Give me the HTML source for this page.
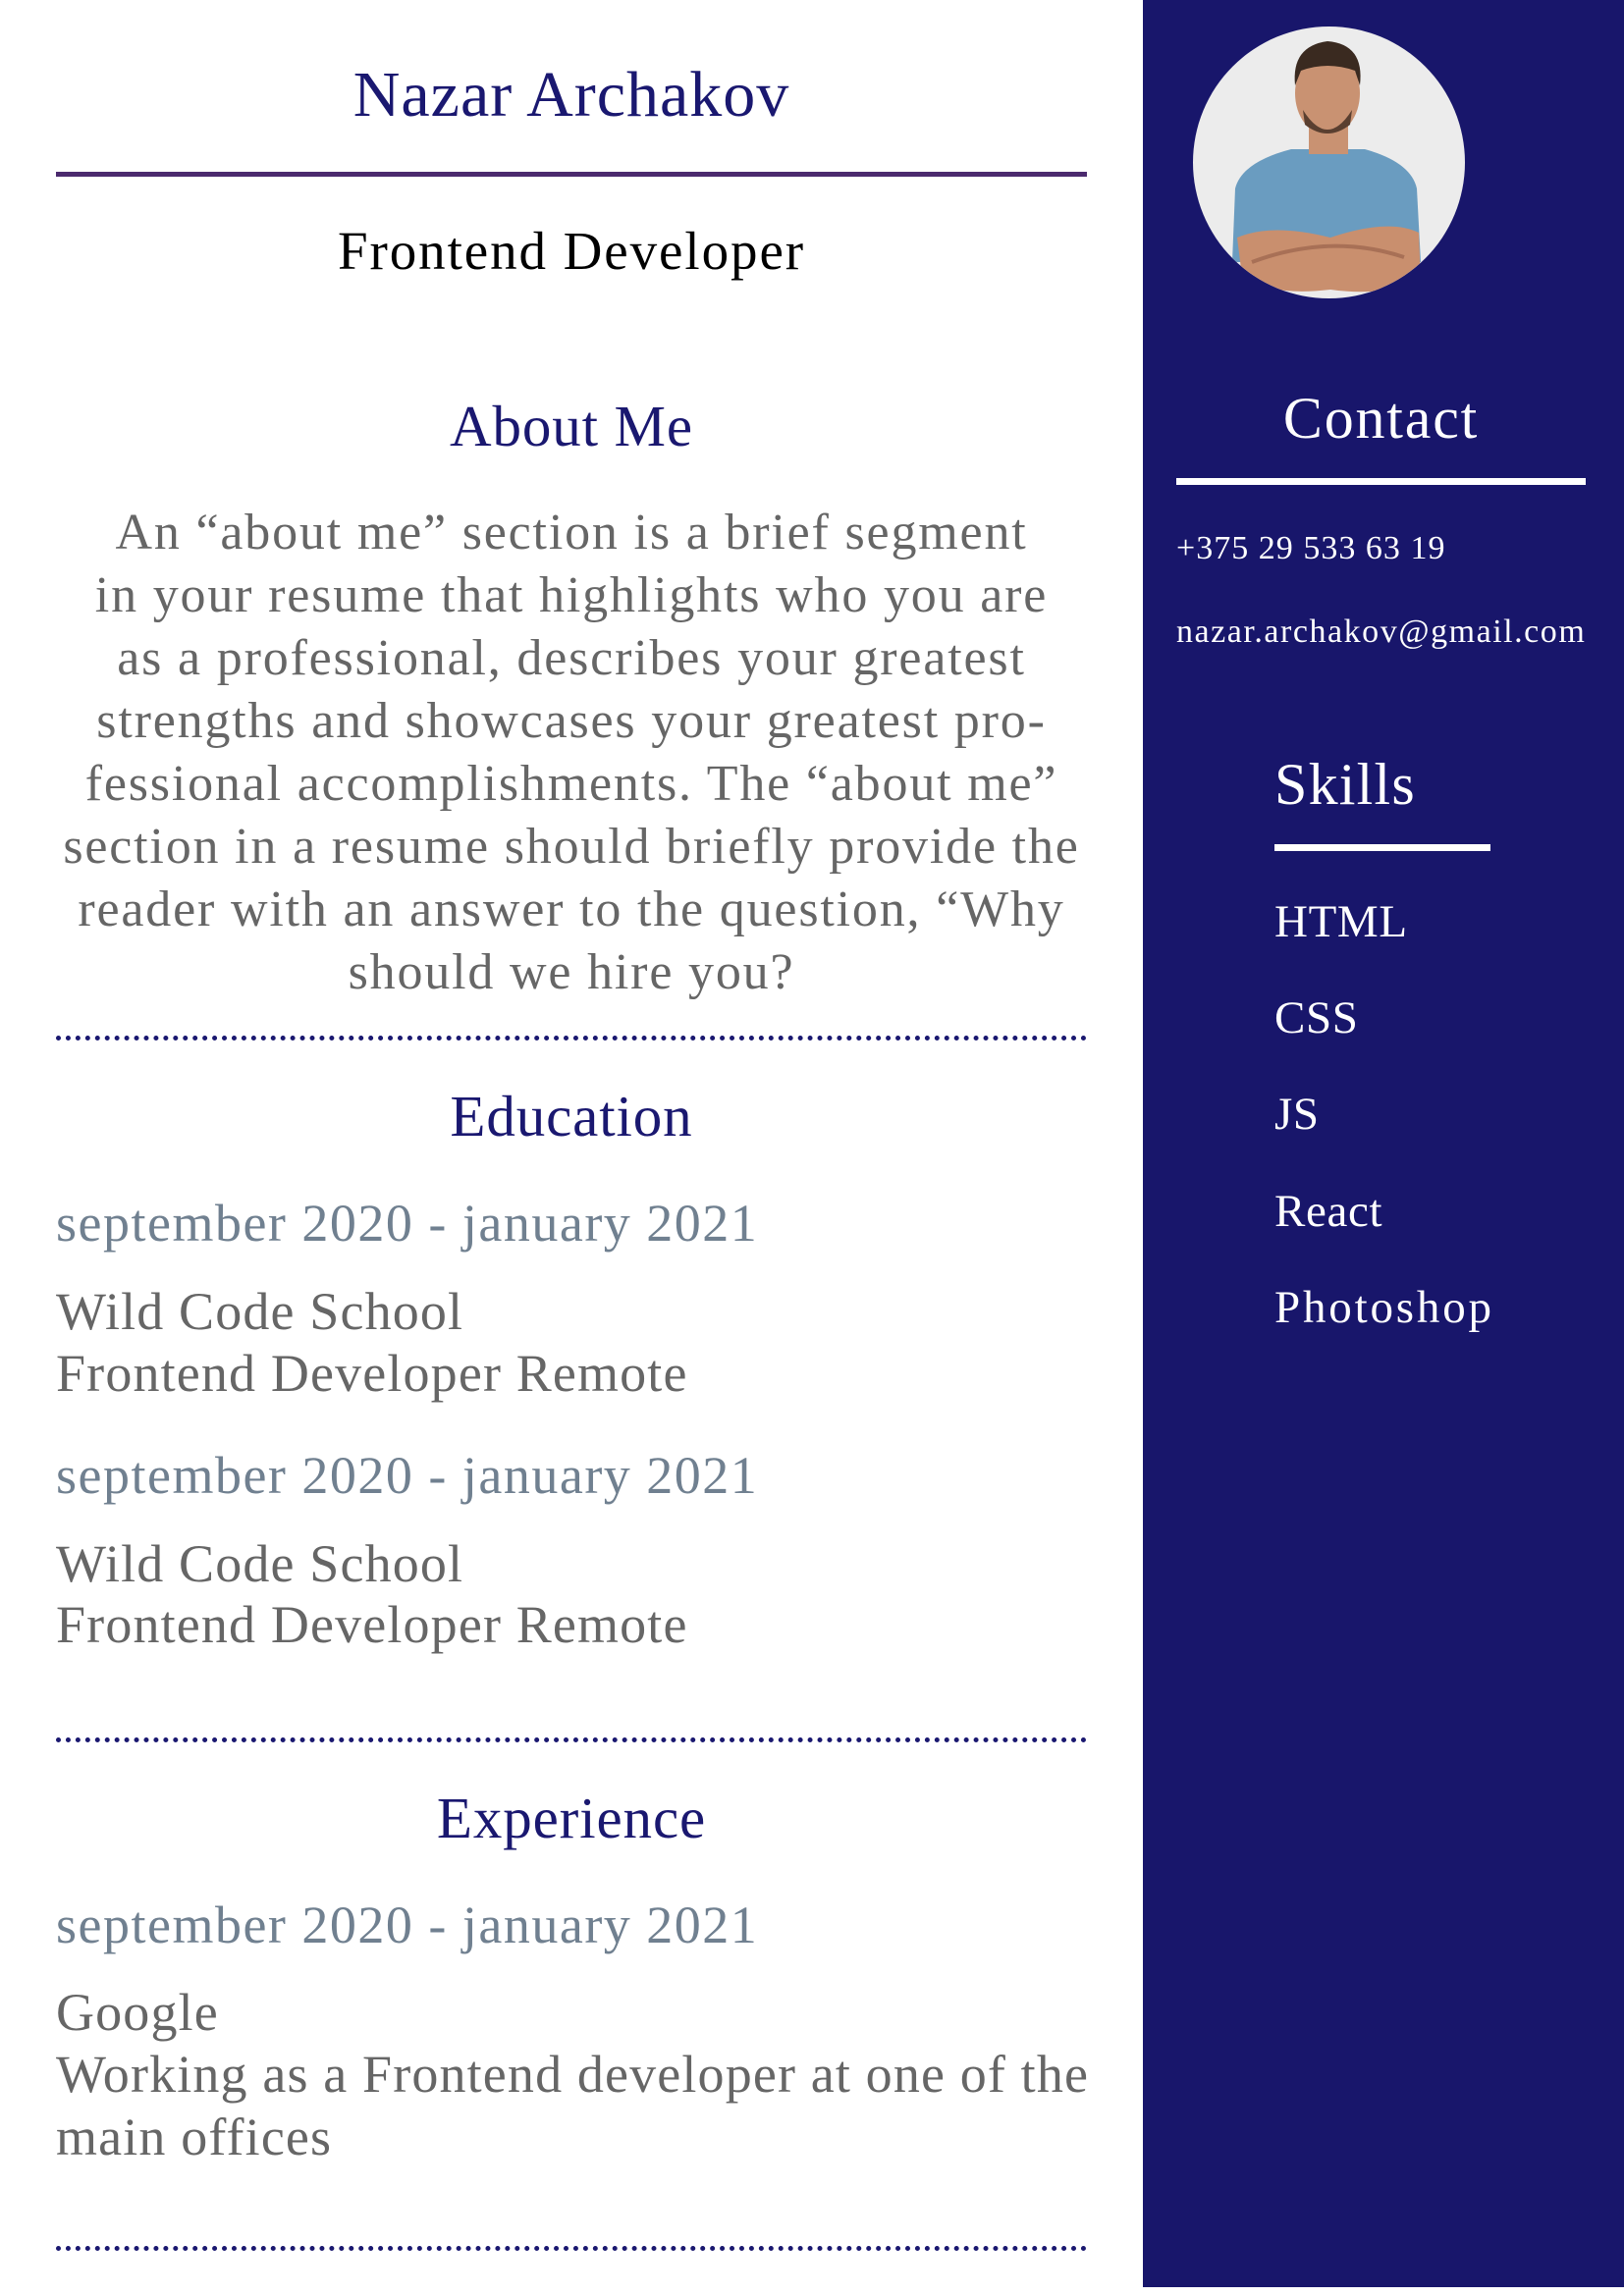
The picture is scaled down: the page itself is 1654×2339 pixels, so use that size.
<!DOCTYPE html>
<html><head><meta charset="utf-8"><style>
*{margin:0;padding:0;box-sizing:border-box}
body{width:1654px;height:2339px;background:#fff;position:relative;overflow:hidden;font-family:"Liberation Serif",serif;letter-spacing:.04em}
.t{position:absolute;white-space:nowrap;line-height:70px;height:70px}
.c{left:57px;width:1050px;text-align:center}
.h{color:#1a1870;font-size:59px;letter-spacing:.015em}
.g{color:#666;font-size:54px;letter-spacing:1.15px}
.d{color:#708090;font-size:54px;left:57px;letter-spacing:1.5px}
.dot{position:absolute;left:57px;width:1050px;height:0;border-top:5px dotted #1a1870}
#side{position:absolute;left:1164px;top:0;width:490px;height:2330px;background:#18166b}
.w{color:#fff}
</style></head><body>
<div class="t c h" style="top:62px;font-size:66px">Nazar Archakov</div>
<div style="position:absolute;left:57px;top:175px;width:1050px;height:5px;background:#4b2a6e"></div>
<div class="t c" style="top:221px;font-size:55px;color:#000;letter-spacing:.035em">Frontend Developer</div>
<div class="t c h" style="top:399px">About Me</div>
<div class="c" style="position:absolute;top:511px;font-size:52px;line-height:64px;color:#666;text-align:center;white-space:nowrap;letter-spacing:.035em">An “about me” section is a brief segment<br>in your resume that highlights who you are<br>as a professional, describes your greatest<br>strengths and showcases your greatest pro-<br>fessional accomplishments. The “about me”<br>section in a resume should briefly provide the<br>reader with an answer to the question, “Why<br>should we hire you?</div>
<div class="dot" style="top:1055px"></div>
<div class="t c h" style="top:1102px">Education</div>
<div class="t d" style="top:1211px">september 2020 - january 2021</div>
<div class="t g" style="left:57px;top:1301px">Wild Code School</div>
<div class="t g" style="left:57px;top:1364px">Frontend Developer Remote</div>
<div class="t d" style="top:1468px">september 2020 - january 2021</div>
<div class="t g" style="left:57px;top:1558px">Wild Code School</div>
<div class="t g" style="left:57px;top:1620px">Frontend Developer Remote</div>
<div class="dot" style="top:1770px"></div>
<div class="t c h" style="top:1817px">Experience</div>
<div class="t d" style="top:1926px">september 2020 - january 2021</div>
<div class="t g" style="left:57px;top:2015px">Google</div>
<div class="t g" style="left:57px;top:2078px">Working as a Frontend developer at one of the</div>
<div class="t g" style="left:57px;top:2142px">main offices</div>
<div class="dot" style="top:2288px"></div>

<div id="side"></div>
<svg style="position:absolute;left:1215px;top:27px" width="277" height="277" viewBox="0 0 277 277">
<defs><clipPath id="cp"><circle cx="138.5" cy="138.5" r="138.5"/></clipPath></defs>
<g clip-path="url(#cp)">
<rect width="277" height="277" fill="#ececec"/>
<path d="M40 240 L43 165 Q50 138 100 125 L175 125 Q222 138 228 165 L232 240 Z" fill="#6a9cc0"/>
<rect x="118" y="95" width="40" height="35" fill="#c99272"/>
<ellipse cx="137" cy="68" rx="33" ry="43" fill="#c99272"/>
<path d="M104 60 Q100 20 137 15 Q175 18 170 60 L165 45 Q137 35 110 45 Z" fill="#3a2a20"/>
<path d="M112 85 Q137 125 162 85 L160 100 Q137 118 114 100 Z" fill="#5a3f30"/>
<path d="M45 215 Q80 200 140 215 Q200 195 230 210 L232 260 Q190 275 140 268 Q80 275 50 255 Z" fill="#c98f6e"/>
<path d="M60 240 Q140 210 215 235" stroke="#a87056" stroke-width="4" fill="none"/>
</g></svg>
<div class="t w" style="left:1198px;width:417px;text-align:center;top:391px;font-size:60px;letter-spacing:.03em">Contact</div>
<div style="position:absolute;left:1198px;top:487px;width:417px;height:7px;background:#fff"></div>
<div class="t w" style="left:1198px;top:524px;font-size:34px;letter-spacing:.03em">+375 29 533 63 19</div>
<div class="t w" style="left:1198px;top:609px;font-size:34px;letter-spacing:.045em">nazar.archakov@gmail.com</div>
<div class="t w" style="left:1298px;top:764px;font-size:60px;letter-spacing:.02em">Skills</div>
<div style="position:absolute;left:1298px;top:860px;width:220px;height:7px;background:#fff"></div>
<div class="t w" style="left:1298px;top:904px;font-size:47px">HTML</div>
<div class="t w" style="left:1298px;top:1002px;font-size:47px">CSS</div>
<div class="t w" style="left:1298px;top:1100px;font-size:47px">JS</div>
<div class="t w" style="left:1298px;top:1199px;font-size:47px">React</div>
<div class="t w" style="left:1298px;top:1297px;font-size:47px;letter-spacing:.06em">Photoshop</div>
</body></html>
